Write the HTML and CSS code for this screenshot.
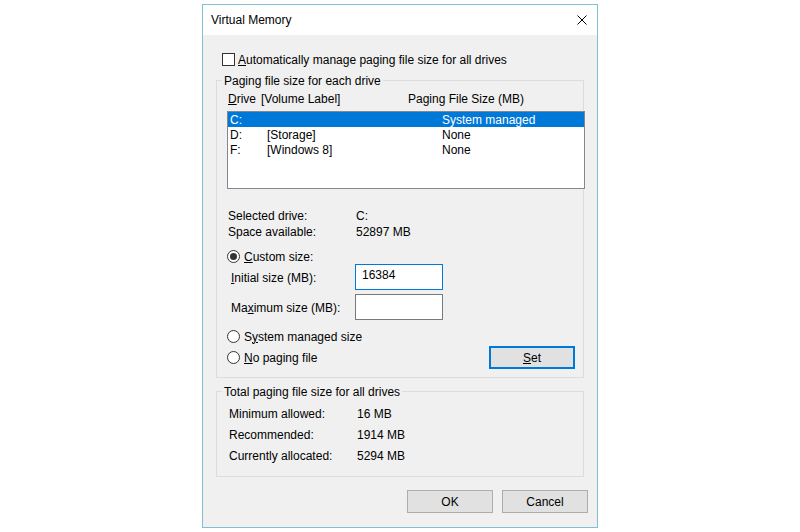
FILE: index.html
```html
<!DOCTYPE html>
<html>
<head>
<meta charset="utf-8">
<title>Virtual Memory</title>
<link rel="stylesheet" href="styles.css">
</head>
<body>
<div class="window">
  <div class="titlebar">
    <span class="title">Virtual Memory</span>
    <svg class="close" width="10" height="10" viewBox="0 0 10 10"><path d="M0.5 0.5L9.5 9.5M9.5 0.5L0.5 9.5" stroke="#000" stroke-width="1" fill="none"/></svg>
  </div>
  <div class="content">
    <div class="check-row">
      <span class="checkbox"></span>
      <span class="check-label"><u>A</u>utomatically manage paging file size for all drives</span>
    </div>

    <div class="group group-drives">
      <div class="legend">Paging file size for each drive</div>
      <div class="cols">
        <span class="hc1"><u>D</u>rive</span>
        <span class="hc2">[Volume Label]</span>
        <span>Paging File Size (MB)</span>
      </div>
      <div class="listbox">
        <div class="lrow sel"><span class="lc1">C:</span><span class="lc2"></span><span>System managed</span></div>
        <div class="lrow"><span class="lc1">D:</span><span class="lc2">[Storage]</span><span>None</span></div>
        <div class="lrow"><span class="lc1">F:</span><span class="lc2">[Windows 8]</span><span>None</span></div>
      </div>
      <div class="info">
        <div class="info-row"><span class="info-label">Selected drive:</span><span>C:</span></div>
        <div class="info-row"><span class="info-label">Space available:</span><span>52897 MB</span></div>
      </div>
      <div class="radio-row radio-custom">
        <span class="radio checked"></span>
        <span class="radio-label"><u>C</u>ustom size:</span>
      </div>
      <div class="size-row size-first">
        <span class="size-label"><u>I</u>nitial size (MB):</span>
        <div class="textbox focused">16384</div>
      </div>
      <div class="size-row size-second">
        <span class="size-label">Ma<u>x</u>imum size (MB):</span>
        <div class="textbox"></div>
      </div>
      <div class="radio-row radio-system">
        <span class="radio"></span>
        <span class="radio-label">S<u>y</u>stem managed size</span>
      </div>
      <div class="set-row">
        <div class="radio-row">
          <span class="radio"></span>
          <span class="radio-label"><u>N</u>o paging file</span>
        </div>
        <div class="button set-button"><u>S</u>et</div>
      </div>
    </div>

    <div class="group group-totals">
      <div class="legend">Total paging file size for all drives</div>
      <div class="totals">
        <div class="total-row"><span class="total-label">Minimum allowed:</span><span>16 MB</span></div>
        <div class="total-row"><span class="total-label">Recommended:</span><span>1914 MB</span></div>
        <div class="total-row"><span class="total-label">Currently allocated:</span><span>5294 MB</span></div>
      </div>
    </div>

    <div class="buttons">
      <div class="button">OK</div>
      <div class="button">Cancel</div>
    </div>
  </div>
</div>
</body>
</html>
```
FILE: styles.css
```css
html, body {
  margin: 0;
  padding: 0;
  background: #ffffff;
}
body {
  font-family: "Liberation Sans", Arial, sans-serif;
  font-size: 12px;
  color: #000;
}
u {
  text-decoration: underline;
  text-underline-offset: 1px;
}
.window {
  box-sizing: border-box;
  width: 396px;
  height: 524px;
  margin: 4px 0 0 202px;
  border: 1px solid #7fc0d2;
  background: #f0f0f0;
}
.titlebar {
  height: 30px;
  background: #ffffff;
  display: flex;
  align-items: center;
  justify-content: space-between;
  padding-left: 8px;
}
.title {
  line-height: 16px;
}
.close {
  display: block;
  margin-right: 10px;
}
.content {
  padding: 0 9px 0 13px;
}
.check-row {
  display: flex;
  align-items: center;
  height: 13px;
  margin: 18px 0 0 6px;
}
.checkbox {
  box-sizing: border-box;
  width: 13px;
  height: 13px;
  border: 1px solid #333;
  background: #fff;
}
.check-label {
  margin-left: 3px;
  line-height: 16px;
}
.group {
  border: 1px solid #dcdcdc;
  margin-right: 4px;
}
.group-drives {
  margin-top: 14px;
  padding-bottom: 8px;
}
.group-totals {
  margin-top: 13px;
  padding-bottom: 9px;
}
.legend {
  display: table;
  margin: -8px 0 0 5px;
  padding: 1px 2px 0;
  line-height: 14px;
  background: #f0f0f0;
}
.cols {
  display: flex;
  margin-top: 4px;
  padding-left: 11px;
  line-height: 15px;
}
.hc1 { width: 33px; }
.hc2 { width: 147px; }
.listbox {
  box-sizing: border-box;
  width: 358px;
  height: 78px;
  margin: 4px 0 0 10px;
  border: 1px solid #828790;
  background: #fff;
}
.lrow {
  box-sizing: border-box;
  display: flex;
  height: 15px;
  line-height: 14px;
  padding: 1px 0 0 2px;
}
.lrow.sel {
  background: #0078d7;
  color: #fff;
}
.lc1 { width: 37px; }
.lc2 { width: 175px; }
.info {
  margin-top: 19px;
  padding-left: 11px;
}
.info-row {
  display: flex;
  line-height: 16px;
}
.info-label { width: 128px; }
.radio-row {
  display: flex;
  align-items: center;
  height: 13px;
  margin-left: 10px;
}
.radio-custom { margin-top: 10px; }
.radio-system { margin-top: 10px; }
.radio {
  box-sizing: border-box;
  width: 13px;
  height: 13px;
  border: 1px solid #333;
  border-radius: 50%;
  background: #fff;
  display: flex;
  align-items: center;
  justify-content: center;
}
.radio.checked::after {
  content: "";
  width: 7px;
  height: 7px;
  border-radius: 50%;
  background: #333;
}
.radio-label {
  margin-left: 4px;
  line-height: 16px;
}
.size-row {
  display: flex;
  align-items: center;
  height: 26px;
  padding-left: 14px;
}
.size-first { margin-top: 1px; }
.size-second { margin-top: 4px; }
.size-label {
  width: 124px;
  padding-top: 2px;
}
.textbox {
  box-sizing: border-box;
  width: 88px;
  height: 26px;
  border: 1px solid #7a7a7a;
  background: #fff;
  padding: 2px 0 0 6px;
  line-height: 16px;
}
.textbox.focused { border-color: #0078d7; }
.set-row {
  display: flex;
  align-items: center;
  justify-content: space-between;
  height: 23px;
  margin-top: 3px;
}
.button {
  box-sizing: border-box;
  width: 86px;
  height: 23px;
  border: 1px solid #adadad;
  background: #e1e1e1;
  display: flex;
  align-items: center;
  justify-content: center;
  line-height: 16px;
}
.set-button {
  border: 2px solid #0078d7;
  margin-right: 8px;
}
.totals {
  margin-top: 5px;
  padding-left: 12px;
}
.total-row {
  display: flex;
  line-height: 21px;
}
.total-label { width: 128px; }
.buttons {
  display: flex;
  justify-content: flex-end;
  gap: 9px;
  margin-top: 13px;
}
```
